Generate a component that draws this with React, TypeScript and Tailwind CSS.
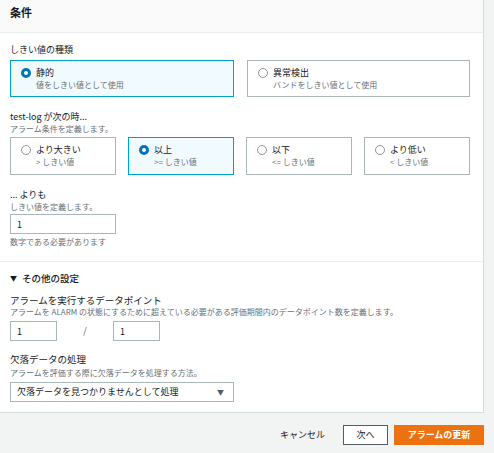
import { useState } from 'react';

const font = { fontFamily: '"Noto Sans CJK JP", "Noto Sans", sans-serif' };

function Radio({ checked }: { checked: boolean }) {
  return checked ? (
    <span className="inline-block w-[10px] h-[10px] rounded-full border-[3px] border-[#0073bb] bg-white shrink-0" />
  ) : (
    <span className="inline-block w-[10px] h-[10px] rounded-full border border-[#8d9696] bg-white shrink-0" />
  );
}

function Tile({
  title,
  sub,
  checked,
  onClick,
  className,
}: {
  title: string;
  sub: string;
  checked: boolean;
  onClick: () => void;
  className: string;
}) {
  return (
    <button
      onClick={onClick}
      className={`${className} flex items-start gap-[5px] pl-[10px] text-left border ${
        checked ? 'border-[#00a1c9] bg-[#f1faff]' : 'border-[#aab7b8] bg-white'
      }`}
    >
      <span className="mt-[1px] flex">
        <Radio checked={checked} />
      </span>
      <span className="flex flex-col">
        <span className="text-[9px] leading-[12px] text-[#16191f]">{title}</span>
        <span className="text-[8px] leading-[12px] text-[#687078]">{sub}</span>
      </span>
    </button>
  );
}

export default function App() {
  const [kind, setKind] = useState('static');
  const [op, setOp] = useState('gte');

  const ops = [
    { id: 'gt', title: 'より大きい', sub: '> しきい値' },
    { id: 'gte', title: '以上', sub: '>= しきい値' },
    { id: 'lte', title: '以下', sub: '<= しきい値' },
    { id: 'lt', title: 'より低い', sub: '< しきい値' },
  ];

  return (
    <div className="w-[494px] h-[453px] bg-[#f2f3f3] text-[#16191f] overflow-hidden" style={font}>
      <div className="w-[484px] bg-white border-r border-b border-[#d5dbdb]">
        {/* header */}
        <div className="h-[33px] bg-[#fafafa] border-b border-[#eaeded] px-[10px] pt-[6px]">
          <h2 className="text-[11px] leading-[13px] font-bold">条件</h2>
        </div>

        {/* threshold section */}
        <div className="px-[10px] pt-[11px] pb-[13px]">
          <div className="text-[9px] leading-[12px]">しきい値の種類</div>
          <div className="mt-[4px] flex gap-[13px]">
            <Tile
              className="w-[224px] h-[37px] pt-[6px]"
              title="静的"
              sub="値をしきい値として使用"
              checked={kind === 'static'}
              onClick={() => setKind('static')}
            />
            <Tile
              className="w-[223px] h-[37px] pt-[6px]"
              title="異常検出"
              sub="バンドをしきい値として使用"
              checked={kind === 'anomaly'}
              onClick={() => setKind('anomaly')}
            />
          </div>

          <div className="mt-[14px] text-[9px] leading-[12px]">test-log が次の時...</div>
          <div className="text-[8px] leading-[12px] text-[#687078]">アラーム条件を定義します。</div>
          <div className="mt-[2px] flex gap-[12px]">
            {ops.map((o) => (
              <Tile
                key={o.id}
                className="w-[106px] h-[38px] pt-[6px]"
                title={o.title}
                sub={o.sub}
                checked={op === o.id}
                onClick={() => setOp(o.id)}
              />
            ))}
          </div>

          <div className="mt-[14px] text-[9px] leading-[12px]">... よりも</div>
          <div className="text-[8px] leading-[12px] text-[#687078]">しきい値を定義します。</div>
          <input
            defaultValue="1"
            className="block mt-[1px] w-[106px] h-[20px] border border-[#aab7b8] px-[6px] text-[9px] outline-none"
          />
          <div className="mt-[2px] text-[8px] leading-[12px] text-[#687078]">数字である必要があります</div>
        </div>

        {/* additional settings */}
        <div className="border-t border-[#eaeded] px-[10px] pt-[10px] pb-[10px]">
          <div className="flex items-center gap-[5px] text-[9.5px] leading-[12px] font-medium">
            <span className="text-[7px]">▼</span>
            その他の設定
          </div>

          <div className="mt-[10px] text-[9.5px] leading-[12px]">アラームを実行するデータポイント</div>
          <div className="text-[8px] leading-[12px] text-[#687078]">
            アラームを ALARM の状態にするために超えている必要がある評価期間内のデータポイント数を定義します。
          </div>
          <div className="mt-[3px] flex items-center">
            <input
              defaultValue="1"
              className="w-[47px] h-[20px] border border-[#aab7b8] px-[6px] text-[9px] outline-none"
            />
            <span className="w-[56px] text-center text-[9px] text-[#545b64]">/</span>
            <input
              defaultValue="1"
              className="w-[47px] h-[20px] border border-[#aab7b8] px-[6px] text-[9px] outline-none"
            />
          </div>

          <div className="mt-[12px] text-[9.5px] leading-[12px]">欠落データの処理</div>
          <div className="mt-[2px] text-[8px] leading-[12px] text-[#687078]">
            アラームを評価する際に欠落データを処理する方法。
          </div>
          <div className="mt-[3px] w-[224px] h-[20px] border border-[#aab7b8] flex items-center justify-between pl-[6px] pr-[9px]">
            <span className="text-[9px]">欠落データを見つかりませんとして処理</span>
            <span className="text-[7px] text-[#545b64]">▼</span>
          </div>
        </div>
      </div>

      {/* footer */}
      <div className="w-[484px] flex justify-end items-center gap-[6px] pt-[12px]">
        <button className="h-[20px] px-[12px] text-[9px] text-[#16191f]">キャンセル</button>
        <button className="h-[20px] w-[45px] border border-[#545b64] bg-white text-[9px]">次へ</button>
        <button className="h-[20px] w-[90px] bg-[#ec7211] text-white text-[9px] font-bold">
          アラームの更新
        </button>
      </div>
    </div>
  );
}
